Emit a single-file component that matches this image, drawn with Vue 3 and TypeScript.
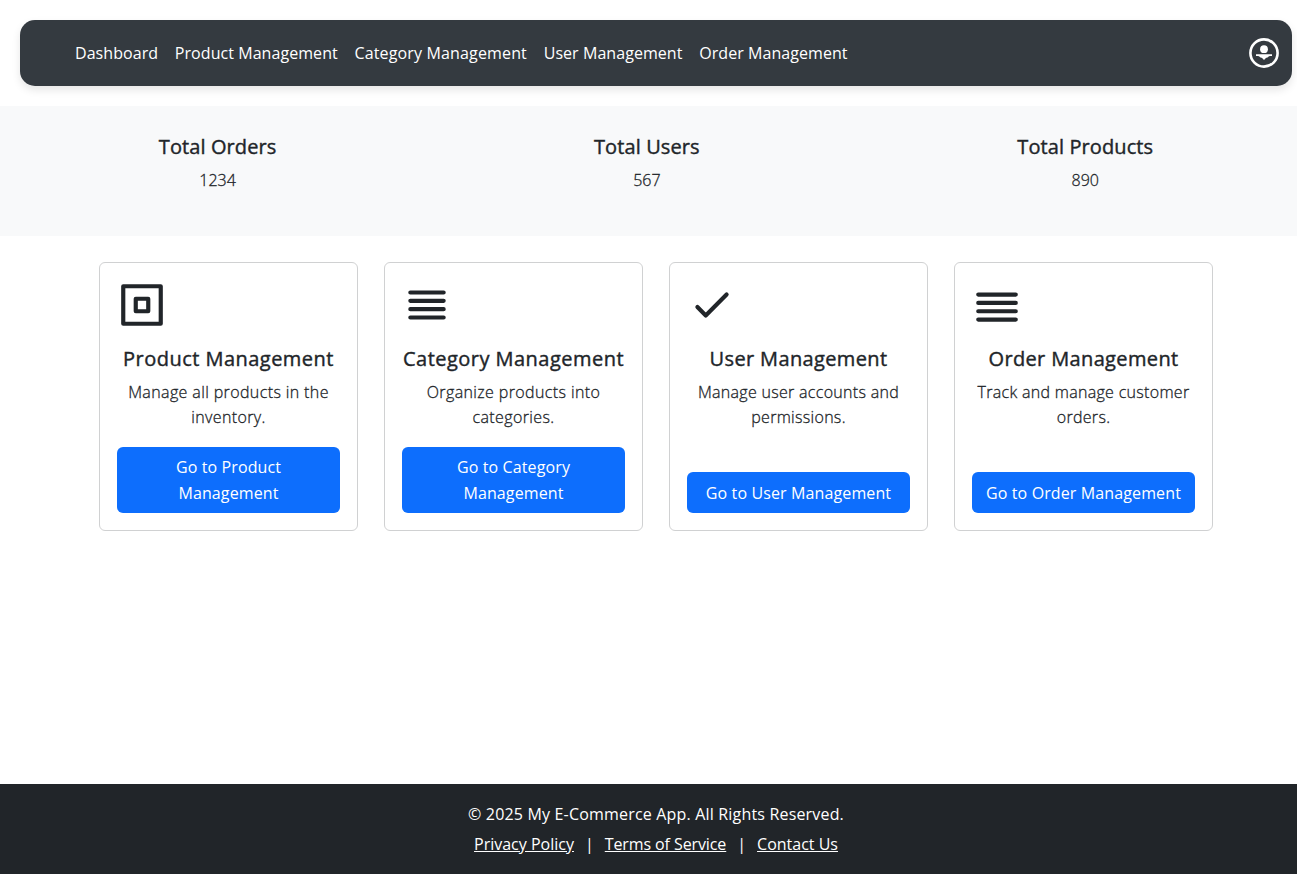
<script setup lang="ts">
const links: string[] = ['Dashboard', 'Product Management', 'Category Management', 'User Management', 'Order Management']

const stats = [
  { key: 'orders', label: 'Total Orders', value: 1234 },
  { key: 'users', label: 'Total Users', value: 567 },
  { key: 'products', label: 'Total Products', value: 890 },
]

const cards = [
  { key: 'product', title: 'Product Management', lines: ['Manage all products in the', 'inventory.'], button: ['Go to Product', 'Management'], icon: 'M3 3h18v18H3zM9 9h6v6H9z' },
  { key: 'category', title: 'Category Management', lines: ['Organize products into', 'categories.'], button: ['Go to Category', 'Management'], icon: 'M4 6h16M4 10h16M4 14h16M4 18h16' },
  { key: 'user', title: 'User Management', lines: ['Manage user accounts and', 'permissions.'], button: ['Go to User Management'], icon: 'M5 13l4 4L19 7' },
  { key: 'order', title: 'Order Management', lines: ['Track and manage customer', 'orders.'], button: ['Go to Order Management'], icon: 'M3 7h18M3 11h18M3 15h18M3 19h18' },
]
</script>

<template>
  <div class="viewport">
    <div class="page">
      <nav class="navbar">
        <a v-for="link in links" :key="link" class="nav-link">{{ link }}</a>
        <svg class="profile" viewBox="0 0 30 30">
          <circle cx="15" cy="15" r="13.6" fill="none" stroke="#fff" stroke-width="2.6" />
          <circle cx="15" cy="11.2" r="3.9" fill="#fff" />
          <path d="M7 16.200h16v1.800h-1.200c-1.500 0-2.600.5-3.600 1.700h-1L15 22l-2.200-2.300h-1c-1-1.200-2.100-1.700-3.600-1.700H7z" fill="#fff" />
        </svg>
      </nav>

      <section class="stats">
        <div v-for="s in stats" :key="s.key" class="stat">
          <h5 class="title">{{ s.label }}</h5>
          <p class="light">{{ s.value }}</p>
        </div>
      </section>

      <main class="cards">
        <article v-for="c in cards" :key="c.key" class="card" :class="c.key">
          <svg class="icon" viewBox="0 0 24 24"><path :d="c.icon" /></svg>
          <h5 class="title">{{ c.title }}</h5>
          <p class="light">
            <span v-for="l in c.lines" :key="l" class="line">{{ l }}</span>
          </p>
          <button class="btn">
            <span v-for="b in c.button" :key="b" class="line">{{ b }}</span>
          </button>
        </article>
      </main>

      <footer class="footer">
        <p class="copy">© 2025 My E-Commerce App. All Rights Reserved.</p>
        <div class="legal">
          <a>Privacy Policy</a><span>|</span><a class="terms">Terms of Service</a><span>|</span><a>Contact Us</a>
        </div>
      </footer>
    </div>
  </div>
</template>

<style>
body { margin: 0; background: #fff; }
</style>

<style scoped>
.viewport { width: 100%; height: 874px; overflow: hidden; }
.page {
  width: 1312px; height: 874px; display: flex; flex-direction: column;
  font-family: "Open Sans", "Noto Sans", sans-serif; font-size: 16px; line-height: 25px; color: #212529;
}
.page * { box-sizing: border-box; }
.navbar {
  flex: none; height: 66px; margin: 20px 20px 20px; padding: 0 13px 0 55px; border-radius: 15px;
  background: #343a40; color: #fff; display: flex; align-items: center; gap: 16.700px;
  box-shadow: 0 4px 8px rgba(0, 0, 0, .1); white-space: nowrap;
}
.nav-link { letter-spacing: .06px; }
.nav-link:nth-child(3) { letter-spacing: .15px; }
.profile { width: 30px; height: 30px; margin-left: auto; }
.stats { flex: none; height: 130px; padding-top: 28px; background: #f8f9fa; display: flex; justify-content: space-around; text-align: center; }
.title {
  margin: 0 0 8px; font-size: 20px; font-weight: 500; line-height: 26px; letter-spacing: .1px;
  white-space: nowrap; text-align: center; -webkit-text-stroke: .4px #212529;
}
.light { margin: 0; font-weight: 300; text-align: center; -webkit-text-stroke: .3px #212529; }
.cards { margin: 26px auto 0; display: flex; gap: 26px; height: 269px; }
.card { width: 259px; height: 269px; padding: 17px; border: 1px solid #d0d1d2; border-radius: 6px; display: flex; flex-direction: column; }
.card .title { letter-spacing: .36px; }
.card.product .title, .card.category .title { letter-spacing: .47px; }
.card .light { letter-spacing: .3px; }
.card.product .light, .card.category .light { letter-spacing: .38px; }
.icon { flex: none; width: 50px; height: 50px; margin-bottom: 16px; fill: none; stroke: #212529; stroke-width: 2; stroke-linecap: round; stroke-linejoin: round; }
.line { display: block; white-space: nowrap; }
.btn {
  margin: auto 0 0; min-height: 41px; padding: 7px 0; border: 0; border-radius: 6px;
  background: #0d6efd; color: #fff; font: inherit; line-height: 26px; letter-spacing: .12px;
}
.footer { margin-top: auto; height: 90px; padding-top: 18px; background: #212529; color: #fff; text-align: center; }
.copy { margin: 0 0 5px; letter-spacing: .18px; }
.legal { display: flex; justify-content: center; gap: 11px; }
.legal a { text-decoration: underline; }
.legal .terms { letter-spacing: -.1px; }
</style>
